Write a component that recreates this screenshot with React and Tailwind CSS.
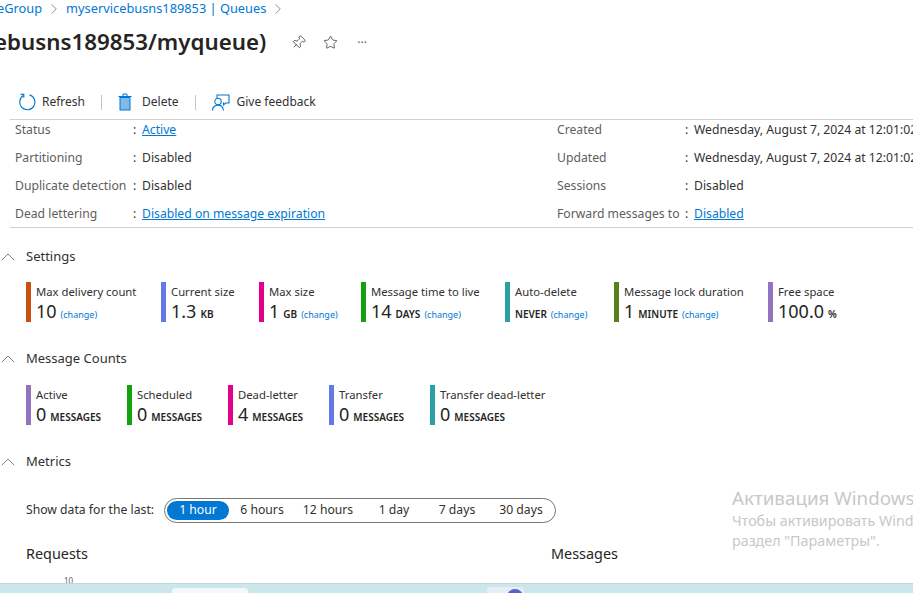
import { ChevronRight, ChevronUp, Pin, Star } from 'lucide-react';

const FONT = "font-['Noto_Sans','Open_Sans',sans-serif]";

const infoLeft = [
  { label: 'Status', value: 'Active', link: true },
  { label: 'Partitioning', value: 'Disabled' },
  { label: 'Duplicate detection', value: 'Disabled' },
  { label: 'Dead lettering', value: 'Disabled on message expiration', link: true },
];

const infoRight = [
  { label: 'Created', value: 'Wednesday, August 7, 2024 at 12:01:02 PM' },
  { label: 'Updated', value: 'Wednesday, August 7, 2024 at 12:01:02 PM' },
  { label: 'Sessions', value: 'Disabled' },
  { label: 'Forward messages to', value: 'Disabled', link: true },
];

const settings = [
  { title: 'Max delivery count', value: '10', change: true, bar: 'bg-[#ca5010]', w: 'w-[135px]' },
  { title: 'Current size', value: '1.3', unit: 'KB', bar: 'bg-[#6479e8]', w: 'w-[98px]' },
  { title: 'Max size', value: '1', unit: 'GB', change: true, bar: 'bg-[#e3008c]', w: 'w-[102px]' },
  { title: 'Message time to live', value: '14', unit: 'DAYS', change: true, bar: 'bg-[#13a10e]', w: 'w-[144px]' },
  { title: 'Auto-delete', unit: 'NEVER', change: true, bar: 'bg-[#2aa0a4]', w: 'w-[109px]' },
  { title: 'Message lock duration', value: '1', unit: 'MINUTE', change: true, bar: 'bg-[#5c7e1a]', w: 'w-[154px]' },
  { title: 'Free space', value: '100.0', unit: '%', bar: 'bg-[#9373c0]', w: 'w-[120px]' },
];

const counts = [
  { title: 'Active', value: '0', bar: 'bg-[#9373c0]' },
  { title: 'Scheduled', value: '0', bar: 'bg-[#13a10e]' },
  { title: 'Dead-letter', value: '4', bar: 'bg-[#e3008c]' },
  { title: 'Transfer', value: '0', bar: 'bg-[#6479e8]' },
  { title: 'Transfer dead-letter', value: '0', bar: 'bg-[#2aa0a4]', wide: true },
];

const ranges = [
  { label: '1 hour', w: 'w-[62px]', active: true },
  { label: '6 hours', w: 'w-[66px]' },
  { label: '12 hours', w: 'w-[66px]' },
  { label: '1 day', w: 'w-[66px]' },
  { label: '7 days', w: 'w-[60px]' },
  { label: '30 days', w: 'w-[68px]' },
];

const RefreshIcon = () => (
  <svg width="18" height="18" viewBox="0 0 18 18" fill="none" stroke="#0078d4" strokeWidth="1.1">
    <path d="M5.5 2.6A7.6 7.6 0 1 0 11.5 1.9" />
    <path d="M2.6 1.4h3.2v3.4" />
  </svg>
);

const TrashIcon = () => (
  <svg width="14" height="18" viewBox="0 0 14 18" fill="none" stroke="#0078d4" strokeWidth="1">
    <rect x="2" y="4.5" width="10" height="12.5" fill="#83b9e6" />
    <path d="M0.5 3.5h13M5 3.5V1h4v2.5" />
  </svg>
);

const FeedbackIcon = () => (
  <svg width="18" height="17" viewBox="0 0 18 17" fill="none" stroke="#0078d4" strokeWidth="1.1">
    <path d="M5 4V1h12v8h-3.5l-2 2V8.5" />
    <circle cx="6" cy="7.5" r="3.2" />
    <path d="M0.5 16.5c0-3.4 2.4-5.4 5.5-5.4s5 1.6 5.5 5.4" />
  </svg>
);

const Tile = ({ title, value, unit, change, bar, w }) => (
  <div className={`flex h-10 shrink-0 gap-[5px] ${w}`}>
    <div className={`w-[5px] h-10 shrink-0 ${bar}`} />
    <div className="flex flex-col">
      <div className="text-[11.3px] leading-[20px] text-[#323130] whitespace-nowrap">{title}</div>
      <div className={`flex items-baseline h-[20px] -mt-[1px] leading-[20px] whitespace-nowrap text-[#252423] ${value ? '' : 'pt-[3px]'}`}>
        {value && <span className="text-[18px] mr-[4px]">{value}</span>}
        {unit && <span className="text-[10px] font-semibold mr-[4px]">{unit}</span>}
        {change && <span className="text-[9px] text-[#0078d4]">(change)</span>}
      </div>
    </div>
  </div>
);

const Section = ({ title }) => (
  <div className="flex items-center h-[20px] text-[13px] text-[#323130]">
    <ChevronUp className="w-[24px] h-[24px] -ml-[4px] mr-[6px] text-[#605e5c]" strokeWidth={0.8} />
    {title}
  </div>
);

const InfoRow = ({ label, value, link, labelWidth }) => (
  <div className="flex items-center h-[28px] text-[12.2px] whitespace-nowrap">
    <span className={`${labelWidth} shrink-0 text-[#605e5c]`}>{label}</span>
    <span className="w-[9px] shrink-0 text-[#323130]">:</span>
    {link ? <a className="text-[#0078d4] underline">{value}</a> : <span className="text-[#323130]">{value}</span>}
  </div>
);

export default function App() {
  return (
    <div className={`relative w-[913px] h-[593px] overflow-hidden bg-white ${FONT}`}>
      {/* breadcrumb, cut off on the left like the screenshot */}
      <div className="flex items-center h-[17px] -ml-[3px] text-[12.8px] text-[#0078d4] whitespace-nowrap">
        <span>eGroup</span>
        <ChevronRight className="w-[18px] h-[18px] mx-[3px] text-[#605e5c]" strokeWidth={0.9} />
        <span>myservicebusns189853 | Queues</span>
        <ChevronRight className="w-[18px] h-[18px] ml-[3px] text-[#605e5c]" strokeWidth={0.9} />
      </div>

      <div className="flex items-center h-[32px] mt-[9px] -ml-[6px] whitespace-nowrap">
        <h1 className="text-[22.3px] font-semibold text-[#252423]">ebusns189853/myqueue)</h1>
        <Pin className="w-[15px] h-[15px] ml-[25px] rotate-45 text-[#323130]" strokeWidth={1.2} />
        <Star className="w-[15px] h-[15px] ml-[17px] text-[#323130]" strokeWidth={1.2} />
        <span className="ml-[19px] mt-[2px] text-[12px] text-[#605e5c]">···</span>
      </div>

      {/* toolbar */}
      <div className="flex items-center h-[30px] mt-[29px] ml-[10px] pl-[8px] text-[12px] text-[#323130] border-b border-[#d2d0ce] box-content pb-[2px]">
        <RefreshIcon />
        <span className="ml-[6px]">Refresh</span>
        <div className="w-px h-[15px] bg-[#c8c6c4] mx-[16px]" />
        <TrashIcon />
        <span className="ml-[10px]">Delete</span>
        <div className="w-px h-[15px] bg-[#c8c6c4] mx-[16px]" />
        <FeedbackIcon />
        <span className="ml-[7px]">Give feedback</span>
      </div>

      {/* essentials */}
      <div className="flex ml-[10px] pl-[5px] border-b border-[#d2d0ce] h-[112px] -mt-[4px]">
        <div className="w-[542px] shrink-0">
          {infoLeft.map((row) => (
            <InfoRow key={row.label} {...row} labelWidth="w-[118px]" />
          ))}
        </div>
        <div>
          {infoRight.map((row) => (
            <InfoRow key={row.label} {...row} labelWidth="w-[128px]" />
          ))}
        </div>
      </div>

      <div className="mt-[19px]">
        <Section title="Settings" />
        <div className="flex pl-[26px] mt-[15px]">
          {settings.map((tile) => (
            <Tile key={tile.title} {...tile} />
          ))}
        </div>
      </div>

      <div className="mt-[27px]">
        <Section title="Message Counts" />
        <div className="flex pl-[26px] mt-[16px]">
          {counts.map((tile) => (
            <Tile key={tile.title} {...tile} unit="MESSAGES" w={tile.wide ? 'w-[130px]' : 'w-[101px]'} />
          ))}
        </div>
      </div>

      <div className="mt-[27px]">
        <Section title="Metrics" />
        <div className="flex items-center pl-[26px] mt-[26px] text-[12.2px] text-[#323130]">
          <span className="w-[138px] shrink-0 whitespace-nowrap">Show data for the last:</span>
          <div className="flex items-center h-[25px] w-[392px] shrink-0 rounded-full border border-[#797775] pl-[2px]">
            {ranges.map((r) => (
              <span
                key={r.label}
                className={`${r.w} h-[19px] flex items-center justify-center rounded-full whitespace-nowrap ${r.active ? 'bg-[#0078d4] text-white' : 'text-[#323130]'}`}
              >
                {r.label}
              </span>
            ))}
          </div>
        </div>
        <div className="flex pl-[26px] mt-[21px] text-[14.4px] leading-[20px] text-[#252423]">
          <span className="w-[525px] shrink-0">Requests</span>
          <span>Messages</span>
        </div>
        <div className="pl-[64px] mt-[12px] h-[8px] overflow-hidden text-[8px] leading-[10px] text-[#605e5c]">10</div>
      </div>

      {/* desktop taskbar peeking in at the bottom */}
      <div className="absolute left-0 right-0 bottom-0 h-[10px] bg-[#cde6ec] border-t border-[#bfd6dc]">
        <div className="absolute left-[172px] top-[4px] w-[76px] h-[6px] rounded-t bg-[#f3f8fa]" />
        <div className="absolute left-[487px] top-[3px] w-[37px] h-[7px] rounded-t bg-[#e4f0f4]" />
        <div className="absolute left-[507px] top-[5px] w-[16px] h-[16px] rounded-full bg-[#5b5fc7]" />
      </div>

      {/* windows activation watermark */}
      <div className="absolute left-[732px] top-[486px] whitespace-nowrap text-[#c8c8c8]">
        <div className="text-[18.8px] leading-[25px]">Активация Windows</div>
        <div className="text-[14.3px] leading-[20px]">Чтобы активировать Windows, перейдите в</div>
        <div className="text-[14.3px] leading-[20px]">раздел "Параметры".</div>
      </div>
    </div>
  );
}
